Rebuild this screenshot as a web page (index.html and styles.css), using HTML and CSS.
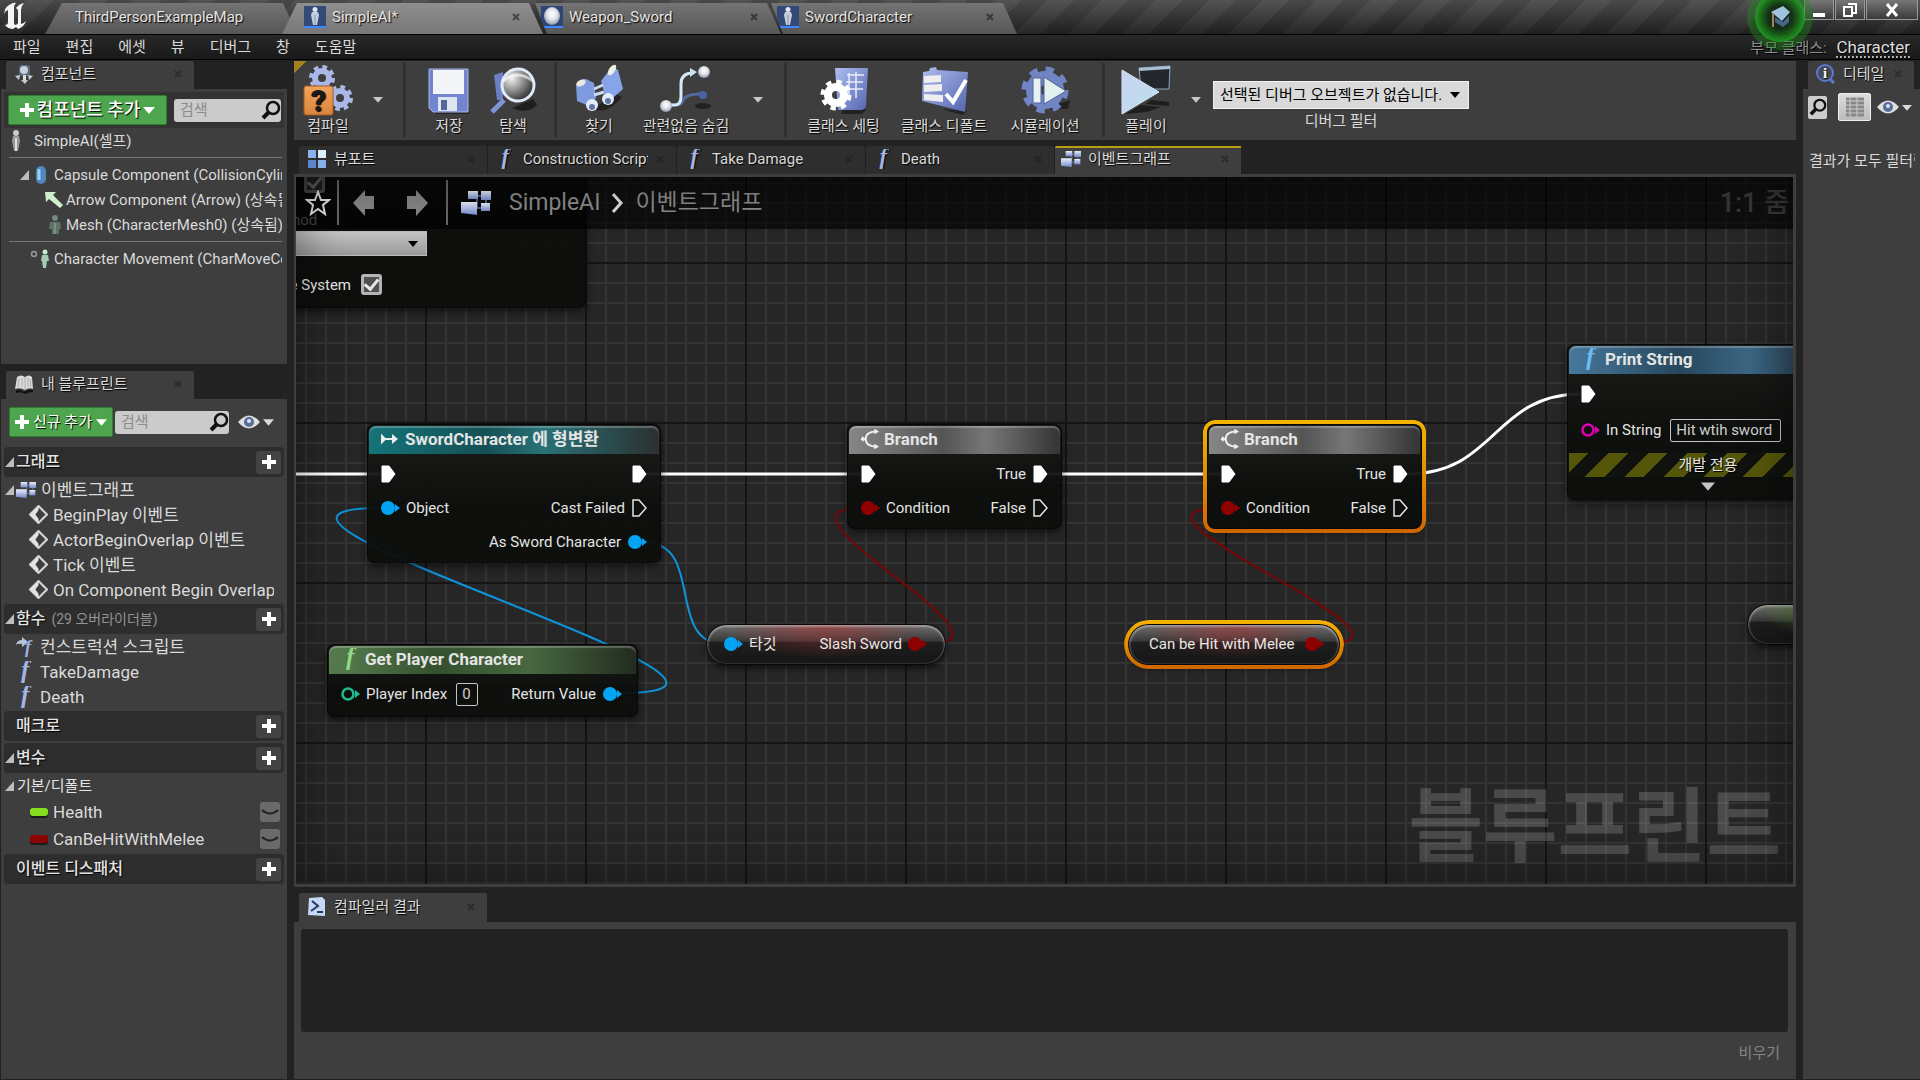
FILE: index.html
```html
<!DOCTYPE html>
<html lang="ko">
<head>
<meta charset="utf-8">
<title>SimpleAI</title>
<link rel="stylesheet" href="styles.css">
</head>
<body>
<svg class="defs" width="0" height="0" aria-hidden="true">
  <defs>
    <linearGradient id="steel" x1="0" y1="0" x2="0" y2="1"><stop offset="0" stop-color="#e8f0fb"/><stop offset="1" stop-color="#7688cc"/></linearGradient>
    <linearGradient id="blue" x1="0" y1="0" x2="1" y2="1"><stop offset="0" stop-color="#aebdf0"/><stop offset="1" stop-color="#5565ae"/></linearGradient>
    <linearGradient id="ice" x1="0" y1="0" x2="1" y2="1"><stop offset="0" stop-color="#c9d2f3"/><stop offset="1" stop-color="#b9e2ea"/></linearGradient>
    <linearGradient id="orange" x1="0" y1="0" x2="0" y2="1"><stop offset="0" stop-color="#f3a45c"/><stop offset="1" stop-color="#d9843c"/></linearGradient>
    <radialGradient id="ball" cx=".5" cy=".4" r=".6"><stop offset="0" stop-color="#fff"/><stop offset=".5" stop-color="#e2e6ea"/><stop offset="1" stop-color="#8b97a8"/></radialGradient>
    <radialGradient id="lens" cx=".3" cy=".3" r=".8"><stop offset="0" stop-color="#f2f2f2"/><stop offset=".5" stop-color="#8a8a8a"/><stop offset="1" stop-color="#222"/></radialGradient>
    <radialGradient id="orb"><stop offset="0" stop-color="#111"/><stop offset=".5" stop-color="#123312"/><stop offset="1" stop-color="#1fa41f"/></radialGradient>
  </defs>
  <symbol id="i-close" viewBox="0 0 8 8"><path d="M1 1l6 6M7 1L1 7" stroke="#1b1b1b" stroke-width="2"/></symbol>
  <symbol id="i-person" viewBox="0 0 22 22"><rect width="22" height="22" fill="#3f5a8c"/><rect width="22" height="22" fill="#1c2c50" opacity=".35"/><rect y="20" width="22" height="2" fill="#3f86ff"/><circle cx="11" cy="3.500" r="2.500" fill="#dfe6ee"/><path d="M8 6h6l1 3-1 5-1 5h-4l-1-5-1-5z" fill="#c5cedb"/><path d="M11 9v10" stroke="#8794a8"/></symbol>
  <symbol id="i-sphere" viewBox="0 0 22 22"><rect width="22" height="22" fill="#2c4675"/><rect y="20" width="22" height="2" fill="#3f86ff"/><ellipse cx="11" cy="10" rx="8" ry="9" fill="url(#ball)"/></symbol>
  <symbol id="i-fn" viewBox="0 0 20 22"><text x="5" y="17" font-family="Liberation Serif, serif" font-style="italic" font-weight="bold" font-size="25" fill="currentColor">f</text></symbol>
  <symbol id="i-graph" viewBox="0 0 30 26"><path d="M12 6h10M12 18h10M16 8v10M25 8v10" stroke="#68759c" stroke-width="1.500"/><rect x="7" y="1" width="10" height="8" fill="url(#steel)"/><rect x="20" y="1" width="10" height="9" fill="url(#steel)"/><path d="M0 12h16v13L0 23z" fill="url(#steel)"/><rect x="20" y="13" width="9" height="8" fill="url(#steel)"/></symbol>
  <symbol id="i-view" viewBox="0 0 20 20"><rect x="1" y="1" width="8" height="8" fill="#8cb2ea"/><rect x="11" y="1" width="8" height="8" fill="#dceefc"/><rect x="1" y="11" width="8" height="8" fill="#5d84cf"/><rect x="11" y="11" width="8" height="8" fill="#89aef0"/></symbol>
  <symbol id="i-component" viewBox="0 0 20 20"><rect x="5" y="1" width="11" height="11" rx="3" fill="#5a6980"/><circle cx="10" cy="6" r="4" fill="#c8d0d8"/><path d="M9 11h3v7H9z" fill="#ddd"/><path d="M1 12l5-1-1 5zM19 12l-5-1 1 5zM7 16h7l-3 4z" fill="#c4cbd3"/></symbol>
  <symbol id="i-book" viewBox="0 0 20 20"><path d="M3 3q4-3 8 0 4-3 7 0l1 12q-4-2-8 1-5-3-10-1z" fill="#d9d9d9"/><path d="M11 3v12M5 5l-1 8M8 4v9M14 4v9M16 5l1 8" stroke="#b0b0b0"/><path d="M2 16q5-1 8 2 4-3 9-2v2q-5 0-8 2-4-3-9-1z" fill="#111"/></symbol>
  <symbol id="i-search" viewBox="0 0 20 20"><circle cx="12" cy="8" r="6" fill="none" stroke="currentColor" stroke-width="2.500"/><path d="M8 12l-6 6" stroke="currentColor" stroke-width="4"/></symbol>
  <symbol id="i-eye" viewBox="0 0 22 14"><path d="M0 7Q11-6 22 7 11 20 0 7z" fill="#dedede"/><circle cx="11" cy="7" r="5" fill="#566d99"/><circle cx="11" cy="6" r="2" fill="#d9e5f5"/></symbol>
  <symbol id="i-down" viewBox="0 0 12 8"><path d="M0 1h12L6 8z" fill="currentColor"/></symbol>
  <symbol id="i-fold" viewBox="0 0 9 10"><path d="M9 0v10H0z" fill="#bdbdbd"/></symbol>
  <symbol id="i-plus" viewBox="0 0 14 14"><path d="M5 0h4v5h5v4H9v5H5V9H0V5h5z" fill="#fff"/></symbol>
  <symbol id="i-event" viewBox="0 0 18 18"><path d="M9 1l8 8-8 8-8-8z" fill="none" stroke="#d5d5d5" stroke-width="2"/><path d="M9 1L1 9l8 8v-4L6 9l3-4z" fill="#e4e4e4"/></symbol>
  <symbol id="i-exec" viewBox="0 0 15 18"><path d="M1 1h7l6 8-6 8H1z" fill="#fff" stroke="#fff"/></symbol>
  <symbol id="i-exec-open" viewBox="0 0 15 18"><path d="M1 1h6l7 8-7 8H1z" fill="none" stroke="#e2e2e2" stroke-width="1.500"/></symbol>
  <symbol id="i-pin" viewBox="0 0 19 14"><circle cx="7" cy="7" r="7" fill="currentColor"/><path d="M14 3l5 4-5 4z" fill="currentColor"/></symbol>
  <symbol id="i-pin-open" viewBox="0 0 19 14"><circle cx="7" cy="7" r="5.500" fill="none" stroke="currentColor" stroke-width="2.500"/><path d="M14 3l5 4-5 4z" fill="currentColor"/></symbol>
  <symbol id="i-branch" viewBox="0 0 20 20"><path d="M0 10h5M17 2q-12 0-12 8t12 8" fill="none" stroke="#eee" stroke-width="2"/><path d="M14-1l5 3-5 3zM14 15l5 3-5 3zM1 7l5 3-5 3z" fill="#eee"/></symbol>
  <symbol id="i-cast" viewBox="0 0 18 12"><path d="M1 3l3 3-3 3zM3 6h10" fill="#eee" stroke="#eee" stroke-width="2"/><path d="M11 1l6 5-6 5z" fill="#eee"/></symbol>
</svg>

<header class="titlebar">
  <svg class="logo" viewBox="0 0 26 30" aria-label="Unreal"><path d="M9 3Q3 5 2 13q1-3 4-4v12q0 3-3 3 3 4 8 4l3-2 2 2q6-2 8-8-3 3-5 3V9q0-4 3-7-5 1-8 5l2 2v13q-1 2-3 2-1 0-1-3V6q0-2 2-4-2-1-5 1z" fill="#f4f4f4"/></svg>
  <nav class="doc-tabs">
    <button class="doc-tab first">ThirdPersonExampleMap</button>
    <button class="doc-tab current"><svg class="doc-icon"><use href="#i-person"/></svg>SimpleAI*<svg class="x"><use href="#i-close"/></svg></button>
    <button class="doc-tab after"><svg class="doc-icon"><use href="#i-sphere"/></svg>Weapon_Sword<svg class="x"><use href="#i-close"/></svg></button>
    <button class="doc-tab after"><svg class="doc-icon"><use href="#i-person"/></svg>SwordCharacter<svg class="x"><use href="#i-close"/></svg></button>
  </nav>
  <div class="window-buttons">
    <button class="win" aria-label="최소화"><svg width="14" height="14"><path d="M1 12h12" stroke="#fff" stroke-width="4"/></svg></button>
    <button class="win" aria-label="복원"><svg width="14" height="14"><path d="M5 1h8v9h-3M1 4h8v9H1z" fill="none" stroke="#fff" stroke-width="2"/></svg></button>
    <button class="win wide" aria-label="닫기"><svg width="14" height="14"><path d="M2 1l10 12M12 1L2 13" stroke="#fff" stroke-width="3"/></svg></button>
  </div>
</header>
<div class="menubar">
  <nav class="menus"><button>파일</button><button>편집</button><button>에셋</button><button>뷰</button><button>디버그</button><button>창</button><button>도움말</button></nav>
  <p class="parent">부모 클래스: <a href="#">Character</a></p>
  <svg class="orb" width="68" height="68" viewBox="0 0 68 68" aria-hidden="true"><circle cx="34" cy="34" r="33" fill="#1e8c1e" opacity=".45"/><circle cx="34" cy="34" r="25" fill="url(#orb)"/><path d="M25 29l12-6 7 6-8 9z" fill="#a9d3f2"/><path d="M29 34l8 5 6-6v6l-6 5-8-5z" fill="#4b6c96"/><path d="M27 30v14" stroke="#b08a5e" stroke-width="2"/></svg>
</div>

<main class="workspace">
  <aside class="left">
    <div class="tabs"><button class="tab on"><svg class="ti"><use href="#i-component"/></svg><span>컴포넌트</span><svg class="x"><use href="#i-close"/></svg></button></div>
    <section class="panel components">
      <div class="add-row">
        <button class="green big"><svg width="14" height="14"><use href="#i-plus"/></svg>컴포넌트 추가<svg width="12" height="8"><use href="#i-down"/></svg></button>
        <label class="search"><input type="text" placeholder="검색" aria-label="컴포넌트 검색"><svg width="20" height="20"><use href="#i-search"/></svg></label>
      </div>
      <ul class="tree">
        <li class="self"><svg width="14" height="22" viewBox="0 0 14 22"><circle cx="7" cy="3" r="3" fill="#ccc"/><path d="M4 6h6l1 5-2 10H5L3 11z" fill="#999"/><path d="M7 8v13" stroke="#ddd" stroke-width="2"/></svg><span>SimpleAI(셀프)</span></li>
        <li class="lvl1 ruled"><svg width="9" height="10"><use href="#i-fold"/></svg><svg width="14" height="20" viewBox="0 0 14 20"><rect x="2" y="1" width="10" height="18" rx="5" fill="#4f86bd"/><path d="M5 4v11" stroke="#9bd0f2" stroke-width="3"/></svg><span>Capsule Component (CollisionCylinder)</span></li>
        <li class="lvl2"><svg width="20" height="18" viewBox="0 0 20 18"><path d="M1 1h11L9 4l10 10-3 3L5 8l-3 3z" fill="#cfeecb"/></svg><span>Arrow Component (Arrow) (상속됨)</span></li>
        <li class="lvl2"><svg width="20" height="20" viewBox="0 0 20 20"><circle cx="11" cy="3" r="3" fill="#71877a"/><path d="M6 7h10l1 7h-2v5H8v-5H5z" fill="#5f7468"/><path d="M11 8v11" stroke="#99ac9e"/></svg><span>Mesh (CharacterMesh0) (상속됨)</span></li>
        <li class="lvl3 ruled"><svg width="22" height="20" viewBox="0 0 22 20"><circle cx="4" cy="5" r="2.500" fill="none" stroke="#999" stroke-width="1.500"/><circle cx="15" cy="3" r="2.500" fill="#c8ead0"/><path d="M12 6h6l1 6h-2l-1 7h-3l-1-7h-1z" fill="#a6ccb0"/></svg><span>Character Movement (CharMoveComp)</span></li>
      </ul>
    </section>

    <div class="tabs second"><button class="tab on"><svg class="ti"><use href="#i-book"/></svg><span>내 블루프린트</span><svg class="x"><use href="#i-close"/></svg></button></div>
    <section class="panel blueprint">
      <div class="new-row">
        <button class="green"><svg width="14" height="14"><use href="#i-plus"/></svg>신규 추가<svg width="11" height="8"><use href="#i-down"/></svg></button>
        <label class="search"><input type="text" placeholder="검색" aria-label="블루프린트 검색"><svg width="20" height="20"><use href="#i-search"/></svg></label>
        <button class="eye" aria-label="보기 옵션"><svg width="22" height="14"><use href="#i-eye"/></svg><svg width="11" height="8"><use href="#i-down"/></svg></button>
      </div>
      <h3 class="cat"><svg width="9" height="10"><use href="#i-fold"/></svg><span>그래프</span><button class="add" aria-label="그래프 추가"><svg width="14" height="14"><use href="#i-plus"/></svg></button></h3>
      <ul class="items">
        <li class="parent-item"><svg width="9" height="10"><use href="#i-fold"/></svg><svg width="20" height="18"><use href="#i-graph"/></svg><span>이벤트그래프</span></li>
        <li class="child"><svg width="19" height="19"><use href="#i-event"/></svg><span>BeginPlay 이벤트</span></li>
        <li class="child"><svg width="19" height="19"><use href="#i-event"/></svg><span>ActorBeginOverlap 이벤트</span></li>
        <li class="child"><svg width="19" height="19"><use href="#i-event"/></svg><span>Tick 이벤트</span></li>
        <li class="child"><svg width="19" height="19"><use href="#i-event"/></svg><span>On Component Begin Overlap</span></li>
      </ul>
      <h3 class="cat"><svg width="9" height="10"><use href="#i-fold"/></svg><span>함수 <small>(29 오버라이더블)</small></span><button class="add" aria-label="함수 추가"><svg width="14" height="14"><use href="#i-plus"/></svg></button></h3>
      <ul class="items">
        <li class="func"><svg width="20" height="20" viewBox="0 0 20 20"><path d="M0 8q1-5 6-5V0l6 5-6 5V7Q2 6 0 8z" fill="#b9c2da"/><text x="9" y="16" font-family="Liberation Serif, serif" font-style="italic" font-weight="bold" font-size="18" fill="#9db1e6">f</text></svg><span>컨스트럭션 스크립트</span></li>
        <li class="func"><svg class="fn" width="20" height="22"><use href="#i-fn"/></svg><span>TakeDamage</span></li>
        <li class="func"><svg class="fn" width="20" height="22"><use href="#i-fn"/></svg><span>Death</span></li>
      </ul>
      <h3 class="cat"><i class="nofold"></i><span>매크로</span><button class="add" aria-label="매크로 추가"><svg width="14" height="14"><use href="#i-plus"/></svg></button></h3>
      <h3 class="cat spaced"><svg width="9" height="10"><use href="#i-fold"/></svg><span>변수</span><button class="add" aria-label="변수 추가"><svg width="14" height="14"><use href="#i-plus"/></svg></button></h3>
      <ul class="items vars">
        <li class="group"><svg width="9" height="10"><use href="#i-fold"/></svg><span>기본/디폴트</span></li>
        <li class="child"><i class="pill-var lime"></i><span>Health</span><button class="closed-eye" aria-label="비공개"><svg width="18" height="8"><path d="M1 2q8 7 16 0" fill="none" stroke="#222" stroke-width="2"/></svg></button></li>
        <li class="child"><i class="pill-var red"></i><span>CanBeHitWithMelee</span><button class="closed-eye" aria-label="비공개"><svg width="18" height="8"><path d="M1 2q8 7 16 0" fill="none" stroke="#222" stroke-width="2"/></svg></button></li>
      </ul>
      <h3 class="cat"><i class="nofold"></i><span>이벤트 디스패처</span><button class="add" aria-label="이벤트 디스패처 추가"><svg width="14" height="14"><use href="#i-plus"/></svg></button></h3>
    </section>
  </aside>

  <section class="center">
    <div class="toolbar">
      <button class="tool compile"><svg width="50" height="52" viewBox="0 0 50 52"><g fill="none" stroke="#a9b8e6"><circle cx="19" cy="14" r="7" stroke-width="6"/><circle cx="19" cy="14" r="11" stroke-width="4" stroke-dasharray="4.640 4"/><circle cx="37" cy="34" r="7" stroke-width="6"/><circle cx="37" cy="34" r="11" stroke-width="4" stroke-dasharray="4.640 4"/></g><rect x="1" y="22" width="29" height="29" rx="2" fill="url(#orange)" stroke="#a15a20"/><text x="15.500" y="47" text-anchor="middle" font-family="Roboto, sans-serif" font-weight="900" font-size="30" fill="#1a1a1a">?</text></svg><span>컴파일</span></button>
      <button class="more" aria-label="컴파일 옵션"><svg width="10" height="7"><use href="#i-down"/></svg></button>
      <i class="sep"></i>
      <button class="tool save"><svg width="50" height="52" viewBox="0 0 50 52"><path d="M8 47h38l-2 3H12z" fill="#111" opacity=".6"/><path d="M5 5h39v43H9l-4-4z" fill="#7186cf" stroke="#aab6e6"/><rect x="9" y="6" width="31" height="24" fill="#f3f5f9"/><rect x="14" y="33" width="19" height="14" fill="#dfe4ee"/><rect x="17" y="36" width="6" height="10" fill="#52669f"/></svg><span>저장</span></button>
      <button class="tool browse"><svg width="50" height="52" viewBox="0 0 50 52"><path d="M24 44q14 7 25-3l-4-6z" fill="#111" opacity=".7"/><path d="M6 11l9-3v28H9z" fill="#6a7fc4"/><path d="M16 36L4 48" stroke="#8093d6" stroke-width="5"/><circle cx="30" cy="21" r="16" fill="url(#lens)" stroke="#e0e9f8" stroke-width="3"/><path d="M15 17q14-12 30 0" fill="none" stroke="#fff" stroke-width="3" opacity=".6"/></svg><span>탐색</span></button>
      <i class="sep"></i>
      <button class="tool find"><svg width="50" height="52" viewBox="0 0 50 52"><path d="M18 45q16 6 30-12l-6-3z" fill="#111" opacity=".6"/><path d="M2 21q4-7 10-6l8 4 2 15-7 8-12-5z" fill="#7f9be0"/><path d="M27 17L38 3l6 3 5 19-9 8-9-2z" fill="#87a4e8"/><ellipse cx="7" cy="19" rx="5" ry="3" fill="#e9e9df" transform="rotate(-25 7 19)"/><ellipse cx="38" cy="6" rx="3" ry="6" fill="#eef0e6" transform="rotate(35 38 6)"/><path d="M20 25l9-4M20 31l10-3" stroke="#c8d8f5" stroke-width="3"/><circle cx="18" cy="41" r="6" fill="#e3ecf7"/><circle cx="34" cy="35" r="6" fill="#e3ecf7"/><circle cx="18" cy="43" r="3" fill="#6274a8"/><circle cx="34" cy="37" r="3" fill="#6274a8"/></svg><span>찾기</span></button>
      <button class="tool hide"><svg width="54" height="52" viewBox="0 0 54 52"><ellipse cx="44" cy="42" rx="8" ry="3" fill="#111" opacity=".6"/><path d="M10 41h8q5 0 6-5 3-6 18-6" fill="none" stroke="#55699f" stroke-width="3"/><path d="M8 41h8q6 0 6-9V20Q22 9 34 9" fill="none" stroke="#d4eaf6" stroke-width="3"/><path d="M31 4l7 4-7 5z" fill="#c8e2f2"/><circle cx="7" cy="42" r="6" fill="url(#ball)"/><circle cx="45" cy="8" r="6" fill="url(#ball)"/><circle cx="44" cy="31" r="4" fill="#4b61a5"/></svg><span>관련없음 숨김</span></button>
      <button class="more" aria-label="숨김 옵션"><svg width="10" height="7"><use href="#i-down"/></svg></button>
      <i class="sep"></i>
      <button class="tool settings"><svg width="50" height="52" viewBox="0 0 50 52"><path d="M24 45h24l-5 5H22z" fill="#111" opacity=".6"/><path d="M16 4h33l-2 38q-1 4-5 4H19z" fill="url(#blue)"/><path d="M28 11h17M27 18h17M27 25h17M30 9v24M37 8v26" stroke="#e8edfb" stroke-width="1.500"/><circle cx="17" cy="31" r="8" fill="none" stroke="#fff" stroke-width="8"/><circle cx="17" cy="31" r="13" fill="none" stroke="#fff" stroke-width="5" stroke-dasharray="5.210 5"/></svg><span>클래스 세팅</span></button>
      <button class="tool defaults"><svg width="50" height="52" viewBox="0 0 50 52"><path d="M22 45l26 2-4 4z" fill="#111" opacity=".6"/><path d="M4 8l6-1 1-3 6-1 1 3 31 2-3 40L3 37z" fill="url(#blue)"/><path d="M5 12l17-1v7L5 19zM5 21l18-1v7L5 28zM5 30l19 1v7L5 36z" fill="#eee"/><path d="M27 30l7 8 13-22" fill="none" stroke="#fff" stroke-width="4"/></svg><span>클래스 디폴트</span></button>
      <button class="tool simulate"><svg width="50" height="52" viewBox="0 0 50 52"><path d="M24 45h24l2-9z" fill="#111" opacity=".6"/><g fill="none" stroke="#7185c4"><circle cx="25" cy="26" r="12" stroke-width="14"/><circle cx="25" cy="26" r="20" stroke-width="7" stroke-dasharray="8 7.700"/></g><path d="M13 14h8v25h-8z" fill="#e7f1f2" stroke="#53629a"/><path d="M24 13l22 14-22 13z" fill="#e2f1ee" stroke="#53629a"/></svg><span>시뮬레이션</span></button>
      <i class="sep"></i>
      <button class="tool play"><svg width="50" height="52" viewBox="0 0 50 52"><path d="M4 50l16-9 20 2-14 5zM30 36l18 2v4L24 40z" fill="#111" opacity=".7"/><path d="M18 4l31-2-1 23H20z" fill="#23262b" stroke="#8ea6be"/><path d="M18 4l31-2v3L18 7z" fill="#a9bfd4"/><path d="M1 6l37 22L1 50z" fill="url(#ice)" stroke="#d9e3f6"/></svg><span>플레이</span></button>
      <button class="more" aria-label="플레이 옵션"><svg width="10" height="7"><use href="#i-down"/></svg></button>
      <div class="debug">
        <div class="select"><select id="debug"><option>선택된 디버그 오브젝트가 없습니다.</option></select></div>
        <label for="debug">디버그 필터</label>
      </div>
    </div>

    <div class="tabs graph-tabs">
      <button class="tab"><svg class="ti"><use href="#i-view"/></svg><span>뷰포트</span><svg class="x"><use href="#i-close"/></svg></button>
      <button class="tab"><svg class="ti fn"><use href="#i-fn"/></svg><span>Construction Script</span><svg class="x"><use href="#i-close"/></svg></button>
      <button class="tab"><svg class="ti fn"><use href="#i-fn"/></svg><span>Take Damage</span><svg class="x"><use href="#i-close"/></svg></button>
      <button class="tab"><svg class="ti fn"><use href="#i-fn"/></svg><span>Death</span><svg class="x"><use href="#i-close"/></svg></button>
      <button class="tab on marked"><svg class="ti"><use href="#i-graph"/></svg><span>이벤트그래프</span><svg class="x"><use href="#i-close"/></svg></button>
    </div>

    <div class="graph">
      <div class="watermark">블루프린트</div>
      <svg class="wires" aria-hidden="true">
        <g transform="translate(-296 -177)" fill="none" stroke-width="3" stroke="#fff">
          <path d="M290 474H381M646 474H861M1048 474H1221M1408 474C1495 474 1494 394 1581 394"/>
          <g stroke="#0d94da" stroke-width="2"><path d="M646 543C704 543 666 644 724 644M622 693C842 693 161 508 381 508"/></g>
          <g stroke="#7a0606" stroke-width="2"><path d="M927 644C1036 644 752 508 861 508M1323 644C1456 644 1088 508 1221 508"/></g>
        </g>
      </svg>

      <article class="node n-system">
        <input class="lead" type="checkbox" checked aria-label="옵션">
        <label class="method" for="method">Method</label>
        <div class="select"><select id="method"><option></option></select></div>
        <label class="sys">Activate System <input type="checkbox" checked></label>
      </article>

      <article class="node n-cast">
        <h2 class="teal"><svg width="18" height="12"><use href="#i-cast"/></svg>SwordCharacter 에 형변환</h2>
        <div class="pins">
          <ul><li><svg class="exec"><use href="#i-exec"/></svg></li><li class="obj"><svg class="pin"><use href="#i-pin"/></svg><span>Object</span></li></ul>
          <ul class="out"><li><svg class="exec"><use href="#i-exec"/></svg></li><li><span>Cast Failed</span><svg class="exec"><use href="#i-exec-open"/></svg></li><li class="obj"><span>As Sword Character</span><svg class="pin"><use href="#i-pin"/></svg></li></ul>
        </div>
      </article>

      <article class="node n-player">
        <h2 class="moss"><svg class="glyph" width="20" height="22"><use href="#i-fn"/></svg>Get Player Character</h2>
        <div class="pins">
          <ul><li class="int"><svg class="pin"><use href="#i-pin-open"/></svg><label for="index">Player Index</label><input id="index" class="idx" type="text" value="0"></li></ul>
          <ul class="out"><li class="obj"><span>Return Value</span><svg class="pin"><use href="#i-pin"/></svg></li></ul>
        </div>
      </article>

      <article class="node n-branch1">
        <h2 class="gray"><svg width="19" height="20"><use href="#i-branch"/></svg>Branch</h2>
        <div class="pins">
          <ul><li><svg class="exec"><use href="#i-exec"/></svg></li><li class="bool"><svg class="pin"><use href="#i-pin"/></svg><span>Condition</span></li></ul>
          <ul class="out"><li><span>True</span><svg class="exec"><use href="#i-exec"/></svg></li><li><span>False</span><svg class="exec"><use href="#i-exec-open"/></svg></li></ul>
        </div>
      </article>

      <article class="node n-branch2 selected">
        <h2 class="gray"><svg width="19" height="20"><use href="#i-branch"/></svg>Branch</h2>
        <div class="pins">
          <ul><li><svg class="exec"><use href="#i-exec"/></svg></li><li class="bool"><svg class="pin"><use href="#i-pin"/></svg><span>Condition</span></li></ul>
          <ul class="out"><li><span>True</span><svg class="exec"><use href="#i-exec"/></svg></li><li><span>False</span><svg class="exec"><use href="#i-exec-open"/></svg></li></ul>
        </div>
      </article>

      <article class="node n-print">
        <h2 class="azure"><svg class="glyph" width="20" height="22"><use href="#i-fn"/></svg>Print String</h2>
        <div class="pins">
          <ul><li><svg class="exec"><use href="#i-exec"/></svg></li><li class="str"><svg class="pin"><use href="#i-pin-open"/></svg><label for="msg">In String</label><input id="msg" class="msg" type="text" value="Hit wtih sword"></li></ul>
        </div>
        <p class="hazard">개발 전용</p>
        <svg class="expand" width="14" height="10"><use href="#i-down"/></svg>
      </article>

      <article class="capsule c-slash"><span class="obj"><svg class="pin"><use href="#i-pin"/></svg>타깃</span><span class="bool">Slash Sword<svg class="pin"><use href="#i-pin"/></svg></span></article>
      <article class="capsule c-melee selected"><span class="bool">Can be Hit with Melee<svg class="pin"><use href="#i-pin"/></svg></span></article>
      <article class="capsule c-green"></article>

      <div class="crumbs">
        <button aria-label="즐겨찾기"><svg width="26" height="26" viewBox="0 0 26 26"><path d="M13 2l3 8h8l-6 5 2 9-7-5-7 5 2-9-6-5h8z" fill="none" stroke="#e4e4e4" stroke-width="2"/></svg></button>
        <i class="bar"></i>
        <button class="back" aria-label="뒤로"><svg width="22" height="30" viewBox="0 0 22 30"><path d="M0 15L12 2v6h9v13h-9v7z" fill="#858585"/></svg></button>
        <button class="fwd" aria-label="앞으로"><svg width="22" height="30" viewBox="0 0 22 30"><path d="M22 15L10 2v6H1v13h9v7z" fill="#858585"/></svg></button>
        <i class="bar"></i>
        <svg class="gicon" width="30" height="26"><use href="#i-graph"/></svg>
        <span>SimpleAI</span>
        <svg class="chev" width="12" height="20" viewBox="0 0 12 20"><path d="M2 1l8 9-8 9" fill="none" stroke="#ddd" stroke-width="3"/></svg>
        <span>이벤트그래프</span>
        <span class="zoom">1:1 줌</span>
      </div>
    </div>

    <div class="tabs second"><button class="tab on"><svg class="ti" viewBox="0 0 18 20"><path d="M1 1l13-1 3 3v16L0 18z" fill="#c5d8f7"/><path d="M4 4l6 5-7 5M9 15h6" fill="none" stroke="#27385e" stroke-width="2"/></svg><span>컴파일러 결과</span><svg class="x"><use href="#i-close"/></svg></button></div>
    <section class="panel results"><div class="log"></div><button class="clear">비우기</button></section>
  </section>

  <aside class="right">
    <div class="tabs"><button class="tab on short"><svg class="ti" viewBox="0 0 20 20"><path d="M13 14l5 5" stroke="#5d78c8" stroke-width="3"/><circle cx="9" cy="9" r="8" fill="#454b58" stroke="#5b78ce" stroke-width="2"/><text x="9" y="14" text-anchor="middle" font-family="Liberation Serif, serif" font-weight="bold" font-size="15" fill="#fff">i</text></svg><span>디테일</span><svg class="x"><use href="#i-close"/></svg></button></div>
    <section class="panel details">
      <div class="detail-tools">
        <button class="find-btn" aria-label="검색"><svg width="18" height="20"><use href="#i-search"/></svg></button>
        <button class="grid-btn" aria-label="표"><svg width="18" height="20" viewBox="0 0 18 20"><path d="M0 2h18M0 6h18M0 10h18M0 14h18M0 18h18" stroke="#888" stroke-width="3"/><path d="M4 0v20M11 0v20" stroke="#ccc"/></svg></button>
        <button class="eye" aria-label="보기 옵션"><svg width="22" height="14"><use href="#i-eye"/></svg><svg width="10" height="7"><use href="#i-down"/></svg></button>
      </div>
      <p>결과가 모두 필터링되었습니다</p>
    </section>
  </aside>
</main>
</body>
</html>
```
FILE: styles.css
```css
* { box-sizing: border-box; }
body {
  margin: 0;
  min-height: 100vh;
  display: flex;
  flex-direction: column;
  overflow: hidden;
  background: #222;
  color: #dadada;
  font: 15px/20px Roboto, "Noto Sans CJK KR", sans-serif;
}
button, input, select { font: inherit; color: inherit; }
button { background: none; border: 0; padding: 0; }
ul { list-style: none; margin: 0; padding: 0; }
h2, h3, p { margin: 0; font: inherit; }
svg { flex: none; display: block; }
.defs { position: absolute; }
.fn { color: #a3b4e8; }

/* title bar */
.titlebar {
  height: 34px;
  display: flex;
  background:
    linear-gradient(rgba(255,255,255,.1), rgba(0,0,0,.4)),
    repeating-linear-gradient(135deg, #343434 0 19px, #404040 19px 38px);
}
.logo { width: 26px; height: 30px; margin: 1px 17px 0 2px; }
.doc-tabs { display: flex; flex: 1; padding-top: 3px; }
.doc-tab {
  display: flex;
  align-items: center;
  width: 250px;
  height: 31px;
  padding: 0 23px 3px 10px;
  background: linear-gradient(#747474, #565656);
  color: #e4e4e4;
  text-shadow: 1px 1px 1px #000;
}
.doc-tab.first { width: 252px; padding-left: 30px; clip-path: polygon(17px 0, calc(100% - 14px) 0, 100% 100%, 0 100%); }
.doc-tab.current {
  position: relative;
  width: 261px;
  margin: 0 -12px 0 -15px;
  padding-left: 22px;
  background: linear-gradient(#8e8e8e, #777);
  clip-path: polygon(15px 0, calc(100% - 14px) 0, 100% 100%, 0 100%);
}
.doc-tab.after { margin-right: -14px; clip-path: polygon(4px 0, calc(100% - 14px) 0, 100% 100%, 16px 100%); }
.doc-icon { width: 22px; height: 22px; margin-right: 6px; }
.x { width: 8px; height: 8px; margin-left: auto; opacity: .6; }
.window-buttons { display: flex; gap: 1px; height: 20px; padding-right: 2px; }
.win {
  width: 30px;
  display: grid;
  place-items: center;
  background: linear-gradient(#777, #3a3a3a);
  border: 1px solid #999;
  border-top: 0;
}
.win.wide { width: 52px; }

/* menu bar */
.menubar {
  position: relative;
  display: flex;
  justify-content: space-between;
  align-items: center;
  height: 26px;
  padding: 0 10px 0 13px;
  border: solid #000;
  border-width: 1px 0;
  background: linear-gradient(#282828, #191919);
}
.menus { display: flex; gap: 25px; }
.parent { color: #8f8f8f; text-shadow: 1px 1px #000; }
.parent a { margin-left: 6px; color: #ddd; font-size: 17px; text-decoration: underline dotted; text-underline-offset: 4px; }
.orb { position: absolute; right: 106px; top: -52px; opacity: .9; }

/* dock layout */
.workspace {
  flex: 1;
  display: grid;
  grid-template-columns: 286px minmax(0, 1fr) 117px;
  gap: 7px;
  padding: 1px 0 1px 1px;
}
.left, .center, .right { display: flex; flex-direction: column; min-width: 0; }
.panel { background: #3e3e3e; }
.tabs { display: flex; padding-left: 5px; }
.tabs.second { margin-top: 7px; }
.tab {
  display: flex;
  align-items: center;
  width: 188px;
  height: 28px;
  padding: 0 12px 2px 8px;
  background: #2e2e2e;
  border-radius: 2px 2px 0 0;
  text-shadow: 1px 1px 1px #000;
}
.tab.on { background: #3e3e3e; }
.tab span { overflow: hidden; white-space: nowrap; margin-right: 8px; }
.tab .x { opacity: .5; }
.ti { width: 20px; height: 20px; margin-right: 7px; }
.tab.short { width: 106px; }

/* components */
.components { height: 275px; padding: 3px; }
.add-row { display: flex; align-items: center; gap: 7px; height: 36px; padding: 0 3px 0 4px; background: #333; }
.green {
  display: flex;
  align-items: center;
  justify-content: center;
  gap: 4px;
  width: 104px;
  height: 30px;
  background: #4da64d;
  border: 1px solid #2f7c33;
  border-radius: 2px;
  color: #fff;
  white-space: nowrap;
  text-shadow: 1px 1px 1px #000;
}
.green.big { width: 159px; gap: 3px; font-size: 18px; font-weight: 500; }
.search { display: flex; align-items: center; flex: 1; min-width: 0; height: 23px; background: #cbcbcb; border-radius: 3px; color: #111; }
.search input { flex: 1; min-width: 0; width: 0; height: 23px; padding: 0 0 0 6px; border: 0; background: none; }
.search input::placeholder { color: #8c8c8c; opacity: 1; }
.tree li { display: flex; align-items: center; height: 25px; white-space: nowrap; overflow: hidden; margin-right: 2px; }
.tree li svg + span { margin-left: 2px; }
.tree li.self { padding-left: 5px; margin-bottom: 4px; }
.tree li.self span { margin-left: 11px; }
.tree .lvl1 svg + svg { margin-left: 5px; }
.tree .lvl1 svg + span { margin-left: 6px; }
.tree .lvl2 { padding-left: 40px; }
.tree .ruled { height: 30px; border-top: 1px solid #777; margin-left: 5px; padding: 4px 0 0 11px; }
.tree .lvl3.ruled { margin-top: 4px; padding-left: 21px; }

/* my blueprint */
.blueprint { flex: 1; padding: 8px 3px 0; }
.new-row { display: flex; align-items: center; gap: 2px; height: 30px; margin: 0 0 10px 5px; }
.new-row .search { flex: 0 0 114px; }
.eye { display: flex; align-items: center; gap: 3px; margin-left: 7px; }
.cat {
  display: flex;
  align-items: center;
  height: 30px;
  padding: 0 3px 0 1px;
  background: #2d2d2d;
  border-radius: 4px;
  color: #e4e4e4;
  font-size: 16px;
  font-weight: 500;
  text-shadow: 1px 1px 1px #000;
}
.cat span { flex: 1; margin-left: 2px; }
.cat small { margin-left: 2px; font-size: 14px; font-weight: 400; color: #929292; text-shadow: none; }
.cat.spaced { margin-top: 2px; }
.nofold { width: 9px; }
.add { display: grid; place-items: center; width: 25px; height: 23px; background: #434343; border-radius: 3px; }
.items { padding-bottom: 2px; font-size: 17px; }
.items li { display: flex; align-items: center; height: 25px; margin-right: 10px; white-space: nowrap; overflow: hidden; }
.items .parent-item { padding-left: 1px; }
.items .parent-item svg + svg { margin: 0 5px 0 2px; }
.items .child { padding-left: 25px; }
.items .child svg { margin-right: 5px; }
.items .func { padding-left: 12px; }
.items .func svg { margin-right: 4px; }
.items.vars li { margin-right: 4px; }
.items.vars .group { padding-left: 1px; font-size: 15px; color: #e4e4e4; }
.items.vars .group span { margin-left: 3px; }
.items.vars .child { height: 27px; }
.pill-var { width: 18px; height: 8px; margin: 0 5px 0 1px; border-radius: 3px; box-shadow: 0 2px #1b1b1b; }
.lime { background: #86dd1e; }
.red { background: #8b0303; }
.closed-eye { display: grid; place-items: center; width: 20px; height: 20px; margin-left: auto; background: #6a6a6a; border-radius: 3px; }
.items .child .closed-eye svg { margin: 0; }

/* toolbar */
.toolbar {
  display: flex;
  height: 79px;
  padding: 3px 0 0 9px;
  background: linear-gradient(135deg, #a3811f 9px, transparent 9px), #3e3e3e;
}
.tool { display: flex; flex-direction: column; align-items: center; justify-content: space-between; height: 71px; white-space: nowrap; text-shadow: 1px 1px 1px #000; }
.more { width: 52px; height: 71px; display: grid; place-items: center; color: #c8c8c8; }
.sep { width: 3px; height: 74px; margin-top: -1px; background: #2f2f2f; }
.compile { width: 50px; }
.compile + .more { width: 50px; }
.save { width: 64px; margin-left: 11px; }
.browse { width: 64px; margin-right: 9px; }
.find { width: 84px; }
.hide { width: 90px; }
.hide + .more { width: 53px; }
.settings { width: 95px; margin-left: 9px; }
.defaults { width: 106px; }
.simulate { width: 96px; margin-right: 9px; }
.play { width: 82px; }
.play + .more { width: 18px; }
.debug { display: flex; flex-direction: column; align-items: center; gap: 2px; margin: 17px 0 0 8px; }
.select { position: relative; }
.select::after { content: ""; position: absolute; right: 9px; top: 50%; margin-top: -3px; border: 5px solid transparent; border-top: 6px solid #000; border-bottom: 0; }
.select select { appearance: none; display: block; width: 100%; border: 1px solid #f2f2f2; border-radius: 0; }
.debug select { width: 256px; height: 28px; padding: 0 20px 0 6px; background: #d9d9d9; color: #000; }

/* graph */
.graph-tabs { margin-top: 6px; }
.graph-tabs .tab { width: 189px; border-right: 1px solid #202020; }
.graph-tabs .tab span { text-overflow: clip; }
.graph-tabs .marked { width: 187px; padding-left: 6px; border-top: 2px solid #b79f13; padding-bottom: 4px; }
.graph {
  position: relative;
  flex: 1;
  min-height: 300px;
  overflow: hidden;
  border: solid #3e3e3e;
  border-width: 3px 3px 3px 2px;
  background:
    linear-gradient(90deg, #141414 2px, transparent 2px) 129px 0 / 160px 160px,
    linear-gradient(#141414 2px, transparent 2px) 0 85px / 160px 160px,
    linear-gradient(90deg, #343434 2px, transparent 2px) 9px 0 / 20px 20px,
    linear-gradient(#343434 2px, transparent 2px) 0 5px / 20px 20px,
    #262626;
}
.graph::after { content: ""; position: absolute; inset: 0; pointer-events: none; box-shadow: inset 0 0 50px rgba(0,0,0,.45); }
.watermark { position: absolute; right: 12px; bottom: 6px; font-size: 81px; line-height: 100px; font-weight: 700; color: rgba(255,255,255,.17); }
.wires { position: absolute; inset: 0; width: 100%; height: 100%; }
.node {
  position: absolute;
  padding: 2px;
  border-radius: 8px;
  background: linear-gradient(rgba(27,29,26,.94), rgba(12,14,11,.95) 60%);
  box-shadow: 0 0 0 1px #080808 inset, 0 3px 8px rgba(0,0,0,.6);
  color: #e4e4e4;
}
.node h2 {
  display: flex;
  align-items: center;
  gap: 4px;
  height: 28px;
  padding: 0 0 2px 12px;
  border-radius: 7px 7px 0 0;
  box-shadow: inset 0 2px 1px rgba(255,255,255,.25);
  font-size: 17px;
  font-weight: 700;
}
.teal { background: linear-gradient(90deg, #147479, #155055 40%, #287277 60%, #2c3030); }
.moss { background: linear-gradient(90deg, #587f50, #34502e 35%, #47683f 65%, #222b20); }
.gray { background: linear-gradient(90deg, #868686, #555 45%, #777 65%, #343434); }
.azure { background: linear-gradient(90deg, #47789b, #27475d 40%, #3c6684 65%, #1d2a33); }
.glyph { color: #8fdc86; }
.azure .glyph { color: #6cbcf4; }
.teal svg { margin-right: 2px; }
.pins { display: flex; justify-content: space-between; padding: 3px 12px 2px 12px; }
.pins li { display: flex; align-items: center; gap: 6px; height: 34px; white-space: nowrap; }
.pins .out li { justify-content: flex-end; gap: 7px; }
.exec { width: 15px; height: 18px; }
.pin { width: 19px; height: 14px; }
.obj .pin { color: #03a4f2; }
.bool .pin { color: #8f0000; }
.int .pin { color: #1fbd90; }
.str .pin { color: #e000b4; }
.selected::after {
  content: "";
  position: absolute;
  inset: -4px;
  padding: 4px;
  border-radius: 12px;
  background: linear-gradient(#f5b400, #d06400);
  mask: linear-gradient(#000 0 0) content-box exclude, linear-gradient(#000 0 0);
  pointer-events: none;
}
.capsule.selected::after { inset: -5px; border-radius: 25px; }
.pins input { height: 23px; background: transparent; border: 1px solid #c4c4c4; border-radius: 2px; padding: 0 5px; color: #cfcfcf; }
.pins .idx { width: 22px; margin-left: 3px; }
.pins .msg { width: 111px; margin-left: 3px; }
.n-cast { left: 71px; top: 247px; width: 294px; }
.n-player { left: 31px; top: 467px; width: 311px; padding-bottom: 4px; }
.n-player .pins { padding-right: 14px; }
.n-branch1 { left: 551px; top: 247px; width: 215px; }
.n-branch2 { left: 911px; top: 247px; width: 215px; }
.n-print { left: 1271px; top: 167px; width: 282px; height: 156px; }
.n-print li + li { height: 38px; }
.n-print .pins { padding-bottom: 4px; }
.hazard { height: 24px; line-height: 24px; text-align: center; text-shadow: 1px 1px 1px #000; background: repeating-linear-gradient(135deg, #56560a 0 14px, #10120f 14px 28px); }
.expand { margin: 4px auto; color: #c4c4c4; }
.n-system { left: -60px; top: -60px; width: 350px; height: 191px; padding: 55px 159px 0 27px; display: flex; flex-direction: column; }
.n-system .method { margin: 16px 0 0 3px; line-height: 22px; color: #aaa; }
.n-system .select select { height: 25px; background: linear-gradient(#c4c4c4, #999); border-color: #bbb; }
.n-system .sys { display: flex; align-items: center; justify-content: flex-end; gap: 10px; margin: 18px 45px 0 -40px; white-space: nowrap; }
input[type=checkbox] { appearance: none; width: 21px; height: 21px; margin: 0; border: 3px solid #b4b4b4; border-radius: 3px; background: #505050; display: grid; place-items: center; flex: none; }
input[type=checkbox]::before { content: ""; width: 6px; height: 11px; margin-top: -4px; border: solid #e8e8e8; border-width: 0 3px 3px 0; transform: rotate(40deg); }
.n-system input.lead { margin-left: 41px; }
.capsule {
  position: absolute;
  display: flex;
  align-items: center;
  justify-content: space-between;
  height: 41px;
  padding: 0 18px 2px 17px;
  border-radius: 21px;
  border: 1px solid #080808;
  background:
    radial-gradient(ellipse at 50% 0, rgba(170,50,50,.6), transparent 60%),
    linear-gradient(#6e6e6e, #373737 42%, #1e1e1e 43%, #161616);
  box-shadow: inset 0 1px 2px 1px rgba(220,220,220,.45), 0 3px 6px rgba(0,0,0,.6);
  color: #e8e8e8;
}
.capsule span { display: flex; align-items: center; gap: 6px; }
.c-slash { left: 410px; top: 447px; width: 240px; }
.c-melee { left: 832px; top: 447px; width: 212px; padding: 0 15px 2px 20px; }
.c-melee span { flex: 1; justify-content: space-between; }
.c-green { left: 1451px; top: 427px; width: 200px; background: radial-gradient(ellipse at 50% 0, rgba(120,190,70,.8), transparent 65%), linear-gradient(#6e6e6e, #373737 42%, #1e1e1e 43%, #161616); }
.crumbs {
  position: absolute;
  inset: 0 0 auto;
  display: flex;
  align-items: center;
  height: 52px;
  padding: 0 4px 1px 9px;
  background: rgba(0,0,0,.62);
  color: #8a8a8a;
  font-size: 23px;
}
.bar { width: 2px; height: 45px; margin-left: 6px; background: #666; }
.back { margin-left: 14px; }
.fwd { margin-left: 31px; }
.fwd + .bar { margin-left: 18px; }
.gicon { margin: 0 18px 0 13px; }
.chev { margin: 0 12px 0 11px; }
.zoom { margin-left: auto; font-size: 27px; font-weight: 500; color: #383838; }

/* compiler results */
.results { height: 157px; padding: 7px 8px 0 7px; display: flex; flex-direction: column; }
.center > .tabs.second { margin-top: 6px; }
.center > .tabs.second .tab { height: 29px; }
.log { height: 103px; background: #222; border-radius: 3px; }
.clear { align-self: flex-end; margin: 11px 8px 0 0; color: #858585; }

/* details */
.right { overflow: hidden; }
.details { flex: 1; padding: 4px 0 0 5px; }
.detail-tools { display: flex; align-items: center; height: 28px; }
.find-btn { width: 19px; height: 23px; display: grid; place-items: center; background: #ccc; border-radius: 2px; color: #111; }
.grid-btn { width: 33px; height: 28px; margin-left: 11px; display: grid; place-items: center; background: linear-gradient(#ddd, #bbb); border: 1px solid #eee; border-radius: 2px; }
.detail-tools .eye { margin-left: 6px; }
.details p { margin: 30px 5px 0 1px; white-space: nowrap; overflow: hidden; }
```
